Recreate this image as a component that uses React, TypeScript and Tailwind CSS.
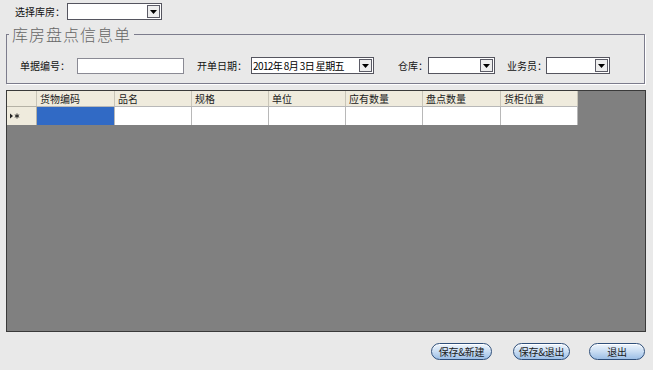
import React from 'react';

const columns = [
  { title: '货物编码', w: 'w-[78px]' },
  { title: '品名', w: 'w-[77px]' },
  { title: '规格', w: 'w-[77px]' },
  { title: '单位', w: 'w-[77px]' },
  { title: '应有数量', w: 'w-[77px]' },
  { title: '盘点数量', w: 'w-[78px]' },
  { title: '货柜位置', w: 'w-[77px]' },
];

function DropArrow() {
  return (
    <div className="m-[1px] flex h-[13px] w-[13px] shrink-0 items-center justify-center border border-[#5b5b66] bg-[#eeeeee]">
      <svg width="7" height="4" viewBox="0 0 7 4">
        <polygon points="0,0 7,0 3.5,4" fill="#000" />
      </svg>
    </div>
  );
}

function Combo({ className, text }: { className: string; text?: string }) {
  return (
    <div className={`flex h-[17px] shrink-0 items-center border border-[#55555f] bg-white ${className}`}>
      <span className="flex-1 overflow-hidden whitespace-pre pl-[1px] text-[10px] leading-[15px] tracking-[-0.6px] text-black">
        {text}
      </span>
      <DropArrow />
    </div>
  );
}

function Label({ text, className }: { text: string; className: string }) {
  return <span className={`shrink-0 whitespace-nowrap ${className}`}>{text}</span>;
}

function PillButton({ label, className }: { label: string; className: string }) {
  return (
    <button
      className={`flex h-[17px] items-center justify-center rounded-full border border-[#2f4f7a] bg-gradient-to-b from-[#eef5fc] via-[#c9ddf3] to-[#9dbfe6] text-[10px] leading-none tracking-[-0.3px] text-[#1b1b1b] shadow-[inset_0_1px_0_#ffffff] ${className}`}
    >
      {label}
    </button>
  );
}

export default function App() {
  return (
    <div className="flex h-[370px] w-[653px] flex-col overflow-hidden bg-[#e9e9e9] font-['Noto_Sans_CJK_SC','Liberation_Sans',sans-serif] text-[10px] text-[#111]">
      {/* 选择库房 */}
      <div className="ml-[15px] mt-[3px] flex h-[17px] items-center">
        <Label text="选择库房：" className="w-[52px]" />
        <Combo className="w-[95px]" />
      </div>

      {/* 信息单 */}
      <fieldset className="ml-[6px] mt-[4px] h-[60px] w-[639px] border border-[#7c7c8c] shadow-[1px_1px_0_#ffffff]">
        <legend className="ml-[2px] px-[3px] text-[16px] font-light leading-[20px] tracking-[1px] text-[#666666]">
          库房盘点信息单
        </legend>
        <div className="ml-[13px] mt-[13px] flex items-center">
          <Label text="单据编号：" className="w-[57px]" />
          <div className="h-[16px] w-[107px] shrink-0 border border-[#8a8a94] bg-white" />
          <Label text="开单日期：" className="ml-[13px] w-[54px]" />
          <Combo className="w-[123px]" text="2012年 8月 3日 星期五" />
          <Label text="仓库：" className="ml-[24px] w-[30px]" />
          <Combo className="w-[67px]" />
          <Label text="业务员：" className="ml-[12px] w-[39px]" />
          <Combo className="w-[64px]" />
        </div>
      </fieldset>

      {/* 表格 */}
      <div className="ml-[6px] mt-[6px] flex h-[242px] w-[640px] flex-col border border-[#3a3a3a] bg-[#808080]">
        <div className="flex h-[15px]">
          <div className="w-[30px] border-r border-[#c9c5b8] bg-[#efebdd]" />
          {columns.map((c) => (
            <div
              key={c.title}
              className={`${c.w} border-r border-[#c9c5b8] bg-[#efebdd] pl-[3px] leading-[15px] text-[#222]`}
            >
              {c.title}
            </div>
          ))}
        </div>
        <div className="flex h-[19px]">
          <div className="flex w-[30px] items-center border-r border-t border-[#b5b2a6] bg-[#efebdd] pl-[3px]">
            <svg width="10" height="6" viewBox="0 0 10 6">
              <polygon points="0,0.5 3,3 0,5.5" fill="#222" />
              <path d="M7 0.5 V5.5 M4.8 1.8 L9.2 4.2 M4.8 4.2 L9.2 1.8" stroke="#222" strokeWidth="1" />
            </svg>
          </div>
          {columns.map((c, i) => (
            <div
              key={c.title}
              className={`${c.w} border-r border-t border-[#b8b8b8] ${i === 0 ? 'bg-[#316ac5]' : 'bg-white'}`}
            />
          ))}
        </div>
      </div>

      {/* 按钮 */}
      <div className="mt-[11px] flex">
        <PillButton label="保存&新建" className="ml-[431px] w-[61px]" />
        <PillButton label="保存&退出" className="ml-[21px] w-[57px]" />
        <PillButton label="退出" className="ml-[19px] w-[56px]" />
      </div>
    </div>
  );
}
